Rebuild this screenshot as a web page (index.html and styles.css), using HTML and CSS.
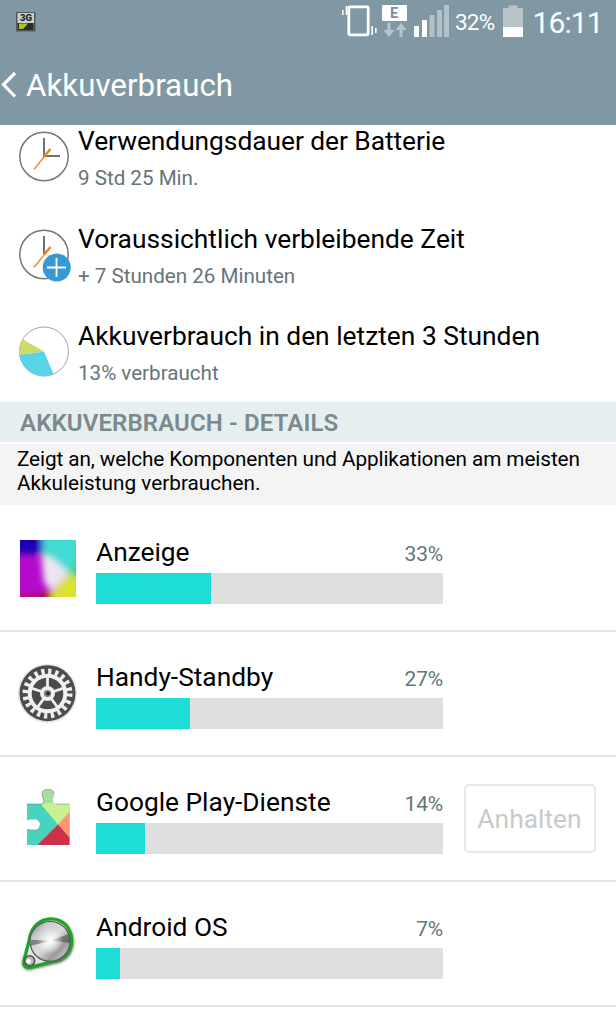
FILE: index.html
```html
<!DOCTYPE html>
<html lang="de">
<head>
<meta charset="utf-8">
<title>Akkuverbrauch</title>
<link rel="stylesheet" href="styles.css">
</head>
<body>
<header class="header">
  <div class="status">
    <svg class="sim" width="20" height="20" viewBox="0 0 20 20"><rect width="19.5" height="19.5" fill="#555955"/><rect x="1.5" y="1" width="16.5" height="10" fill="#c9cfcb"/><text x="4" y="9" class="sim-text">3G</text><path d="M2 11h15v7H2z" fill="#272d2d"/><path d="M3 11.5h9l-5 5.5H3z" fill="#a2cd12"/></svg>
    <svg class="signals" width="122" height="50" viewBox="0 0 122 50">
      <rect x="8.8" y="6.8" width="19.4" height="28" rx="1" fill="none" stroke="#fff" stroke-width="2.8"/>
      <path d="M2.8 10v5M6.500 6v9M32.2 26v9M35.8 28v5" stroke="#fff" stroke-width="1.6"/>
      <rect x="42" y="5" width="25" height="16" rx="1" fill="#fff"/>
      <text x="50" y="18" class="edge">E</text>
      <path d="M47.500 23h3v7h4L49 37l-5.500-7h4zM59.500 37h3v-7h4L61 23l-5.500 7h4z" fill="#b5c4cc"/>
      <path d="M74 26h5v11h-5zM82 20h5v17h-5z" fill="#fff"/>
      <path d="M89.500 15h5v22h-5zM97 10h5v27h-5zM104 5h5v32h-5z" fill="#b2c2c9"/>
    </svg>
    <span class="percent">32%</span>
    <svg class="battery" width="20" height="50" viewBox="0 0 20 50"><path d="M0 8h5.500V5.500h9V8H20v19H0z" fill="#b7c5cb"/><path d="M0 27h20v10H0z" fill="#fff"/></svg>
    <span class="time">16:11</span>
  </div>
  <div class="titlebar">
    <svg width="18" height="28" viewBox="0 0 18 28"><path d="M15 2 3.500 13.500l11.500 12" fill="none" stroke="#fff" stroke-width="3.200"/></svg>
    <h1>Akkuverbrauch</h1>
  </div>
</header>
<main>
  <section class="summary">
    <div class="info first">
      <svg class="info-icon" width="54" height="54" viewBox="0 0 54 54"><circle cx="26" cy="26.500" r="24.200" fill="#fff" stroke="#71777b" stroke-width="1.500"/><path d="M26 8v18h16" fill="none" stroke="#66757d" stroke-width="2"/><path d="M16 39.500 32 19.500" stroke="#f08318" stroke-width="1.300"/><path d="M26 26.500 32.500 19" stroke="#f08318" stroke-width="2.300"/></svg>
      <div><h2>Verwendungsdauer der Batterie</h2><p>9 Std 25 Min.</p></div>
    </div>
    <div class="info">
      <svg class="info-icon" width="54" height="54" viewBox="0 0 54 54"><circle cx="26" cy="26.500" r="24.200" fill="#fff" stroke="#71777b" stroke-width="1.500"/><path d="M26 8v18" fill="none" stroke="#66757d" stroke-width="2"/><path d="M16 39.500 32 19.500" stroke="#f08318" stroke-width="1.300"/><path d="M26 26.500 32.500 19" stroke="#f08318" stroke-width="2.300"/><circle cx="38.700" cy="39.500" r="14" fill="#3998d4"/><path d="M38.500 30v19M29 39.500h19" stroke="#fff" stroke-width="1.800"/></svg>
      <div><h2>Voraussichtlich verbleibende Zeit</h2><p>+ 7 Stunden 26 Minuten</p></div>
    </div>
    <div class="info">
      <svg class="info-icon" width="54" height="54" viewBox="0 0 54 54"><circle cx="26" cy="26.500" r="24.500" fill="#fff" stroke="#a3a4a2" stroke-width="1"/><path d="M26 26.500 4.700 14.200A24.600 24.600 0 0 0 1.500 30z" fill="#cedb69"/><path d="M26 26.500 1.500 30A24.600 24.600 0 0 0 35.500 49.200z" fill="#59d4e7"/></svg>
      <div><h2>Akkuverbrauch in den letzten 3 Stunden</h2><p>13% verbraucht</p></div>
    </div>
  </section>
  <h3 class="section-title">AKKUVERBRAUCH - DETAILS</h3>
  <p class="description"><span class="lead">Zeigt an, welche Komponenten und Applikationen am meisten</span><br>Akkuleistung verbrauchen.</p>
  <section class="items">
    <article class="item">
      <svg class="app-icon" width="60" height="64" viewBox="0 0 60 64"><defs><clipPath id="sq"><path d="M2 4h56v57H2z"/></clipPath><filter id="soft" x="-30%" y="-30%" width="160%" height="160%"><feGaussianBlur stdDeviation="3"/></filter></defs><g clip-path="url(#sq)"><path d="M0 0h60v64H0z" fill="#b50ccb"/><g filter="url(#soft)"><path d="M-8-8h32v26H-8z" fill="#1b00b6"/><path d="M-8 60h30l8-7 8 8v9H-8z" fill="#ae0b2b"/><path d="M24-8h45v48H55L44 34 25 22z" fill="#42dcd2"/><path d="M58 25h14v26H50z" fill="#3bd92e"/><path d="M50 38 72 46v28H36l-4-16z" fill="#dce22d"/><path d="m23 18 11 4 17 15-17 18-8-8z" fill="#ece4ef"/></g></g></svg>
      <div class="usage"><div class="label"><h2>Anzeige</h2><span class="pct">33%</span></div><div class="bar"><div class="fill" style="width:33%"></div></div></div>
    </article>
    <article class="item">
      <svg class="app-icon" width="60" height="64" viewBox="0 0 60 64"><circle cx="29.500" cy="32.500" r="29.500" fill="#e5e5e5"/><circle cx="29.500" cy="32.200" r="28" fill="#4c4c4c"/><circle cx="29.500" cy="32.500" r="21.500" fill="none" stroke="#eee" stroke-width="7" stroke-dasharray="3.200 3.554"/><circle cx="29.500" cy="32.500" r="17.800" fill="none" stroke="#f1f1f1" stroke-width="4"/><path d="M29.500 32.500v-17M29.500 32.500l16.200-5.300M29.500 32.500l10 13.800M29.500 32.500l-10 13.800M29.500 32.500l-16.200-5.300" stroke="#eee" stroke-width="2.800"/><circle cx="29.500" cy="32.500" r="7.500" fill="#f0f0f0"/><circle cx="29.500" cy="32.500" r="3.600" fill="#777"/><circle cx="30" cy="32.500" r="1.700" fill="#222"/></svg>
      <div class="usage"><div class="label"><h2>Handy-Standby</h2><span class="pct">27%</span></div><div class="bar"><div class="fill" style="width:27%"></div></div></div>
    </article>
    <article class="item">
      <svg class="app-icon" width="60" height="64" viewBox="0 0 60 64"><defs><clipPath id="puzzle"><path d="M9 11h13.500c2.500 0 3.800-1 3.200-3.500C25.500 5 24 4 24 1c0-3.500 2.500-4.500 6-4.500s6 1 6 4.500c0 3-1.500 4-1.200 6.500 0 2.500 1.200 3.500 3.700 3.500h13V52H9V36.500c2 0 3 .5 4 .5h4c3 0 5-2 5-5s-2-5.500-5-5.500h-4c-2 0-3 1-4 .5z"/></clipPath></defs><g transform="translate(0 7)"><g clip-path="url(#puzzle)"><path d="M0-6h60v60H0z" fill="#47d3bd"/><path d="M21 9V-6h32v24L40 31.500z" fill="#c9f092"/><path d="M22-6h15v16H24z" fill="#a5dfa0"/><path d="M18 53.500 40 31.500l15 15v8z" fill="#ce3049"/><path d="m40 31.500 13-14v29z" fill="#ff9676"/></g><path d="M9 11h13.500c2.500 0 3.800-1 3.200-3.500C25.500 5 24 4 24 1c0-3.500 2.500-4.500 6-4.500s6 1 6 4.500M38.500 11h13M9 36.500c2 0 3 .5 4 .5h4c3 0 5-2 5-5" fill="none" stroke="#607268" stroke-width=".8" opacity=".6"/></g></svg>
      <div class="usage"><div class="label"><h2>Google Play-Dienste</h2><span class="pct">14%</span></div><div class="bar"><div class="fill" style="width:14%"></div></div></div>
      <button class="stop">Anhalten</button>
    </article>
    <article class="item">
      <svg class="app-icon" width="60" height="64" viewBox="0 0 60 64"><defs><linearGradient id="steel" x1="0" y1="0" x2="1" y2="1"><stop stop-color="#666"/><stop offset=".25" stop-color="#ccc"/><stop offset=".5" stop-color="#ddd"/><stop offset=".72" stop-color="#999"/><stop offset="1" stop-color="#eee"/></linearGradient><radialGradient id="shine"><stop stop-color="#fff"/><stop offset="1" stop-color="#fff" stop-opacity="0"/></radialGradient><filter id="shadow" x="-20%" y="-20%" width="140%" height="140%"><feGaussianBlur stdDeviation="1.500"/></filter></defs><g transform="translate(0 1.800)"><path d="M11 28C13 14 22 6 34 6c12 0 21 10 21 22 0 13-9 21-20 22L15 55c-6 3-12-1-11-7z" fill="#444" filter="url(#shadow)" transform="translate(.5 1)"/><path d="M11 28C13 14 22 6 33 6c12 0 20.500 9 20.500 22 0 12-9 20-20 21L14 54c-6 2-9-1-8-6z" fill="#e4e4e4" stroke="#18a91f" stroke-width="3.300"/><circle cx="32" cy="28.500" r="20" fill="url(#steel)" stroke="#615769" stroke-width="1.300"/><path d="m33 28-20-1v6zM33 28l18-7 1 9z" fill="#333" opacity=".5"/><circle cx="32" cy="28" r="13" fill="url(#shine)"/><circle cx="11.700" cy="48" r="5" fill="#b8b8b8" stroke="#535353" stroke-width="1.600"/><circle cx="10.500" cy="48.500" r="2.300" fill="#fff"/></g></svg>
      <div class="usage"><div class="label"><h2>Android OS</h2><span class="pct">7%</span></div><div class="bar"><div class="fill" style="width:7%"></div></div></div>
    </article>
  </section>
</main>
</body>
</html>
```
FILE: styles.css
```css
* { box-sizing: border-box; }
body { margin: 0; width: 616px; height: 1024px; overflow: hidden; background: #fff; color: #000; font-family: Roboto, sans-serif; }
h1, h2, h3, p { margin: 0; font-weight: 400; white-space: nowrap; }
svg { display: block; flex: none; }
.header { height: 125px; background: #7f98a4; color: #fff; }
.status { height: 50px; display: flex; align-items: flex-start; padding-left: 16px; }
.sim { margin-top: 12px; }
.sim-text { font: 900 9.5px Roboto, sans-serif; fill: #222; }
.signals { margin-left: 304px; }
.edge { font: 700 14.5px Roboto, sans-serif; fill: #78909b; }
.percent { font-size: 22.5px; line-height: 44px; width: 41px; letter-spacing: -.8px; margin-left: -7px; }
.battery { margin-left: 7px; }
.time { font-size: 30px; line-height: 45px; margin-left: 9.5px; letter-spacing: -.9px; }
.titlebar { display: flex; height: 70px; align-items: center; }
.titlebar h1 { margin-left: 8px; font-size: 31.3px; line-height: 70px; padding-top: 1px; }
.summary { height: 277px; }
.info { height: 97.5px; display: flex; padding-left: 18px; }
.info.first { height: 96px; }
.info-icon { margin-top: 5px; }
.info > div { margin-left: 6px; }
.info h2 { font-size: 26.35px; line-height: 32px; }
.info.first h2 { letter-spacing: -.05px; }
.info p { margin-top: 2px; color: #66747b; font-size: 20.6px; line-height: 38px; }
.info.first + .info { padding-top: 2px; }
.info:last-child { padding-top: 1px; }
.section-title { height: 40px; background: #e5efef; color: #7c898d; font-size: 24px; font-weight: 600; line-height: 43px; padding-left: 20px; letter-spacing: .12px; }
.description { border-top: 2px solid #fff; height: 63px; background: #f4f4f4; font-size: 20.75px; line-height: 24px; padding: 3px 0 0 17px; }
.lead { letter-spacing: -.1px; }
.item { height: 125px; border-bottom: 2px solid #e4e4e4; display: flex; padding-left: 18px; }
.item:first-child { height: 127px; padding-top: 2px; }
.app-icon { margin-top: 29px; }
.usage { width: 347px; margin-left: 18px; }
.label { display: flex; align-items: center; justify-content: space-between; height: 66px; padding-top: 24px; }
.label h2 { font-size: 26.3px; line-height: 40px; }
.pct { font-size: 21px; color: #66747b; letter-spacing: -.2px; padding-top: 3px; }
.bar { height: 31px; background: #dfdfdf; }
.fill { height: 100%; background: #1eddd7; }
.stop { width: 132px; height: 69px; margin: 27px 0 0 20.5px; padding: 0; border: 2px solid #e8e8e8; border-radius: 5px; background: #fff; color: #c9c9c9; font: 400 26.4px Roboto, sans-serif; }
```
